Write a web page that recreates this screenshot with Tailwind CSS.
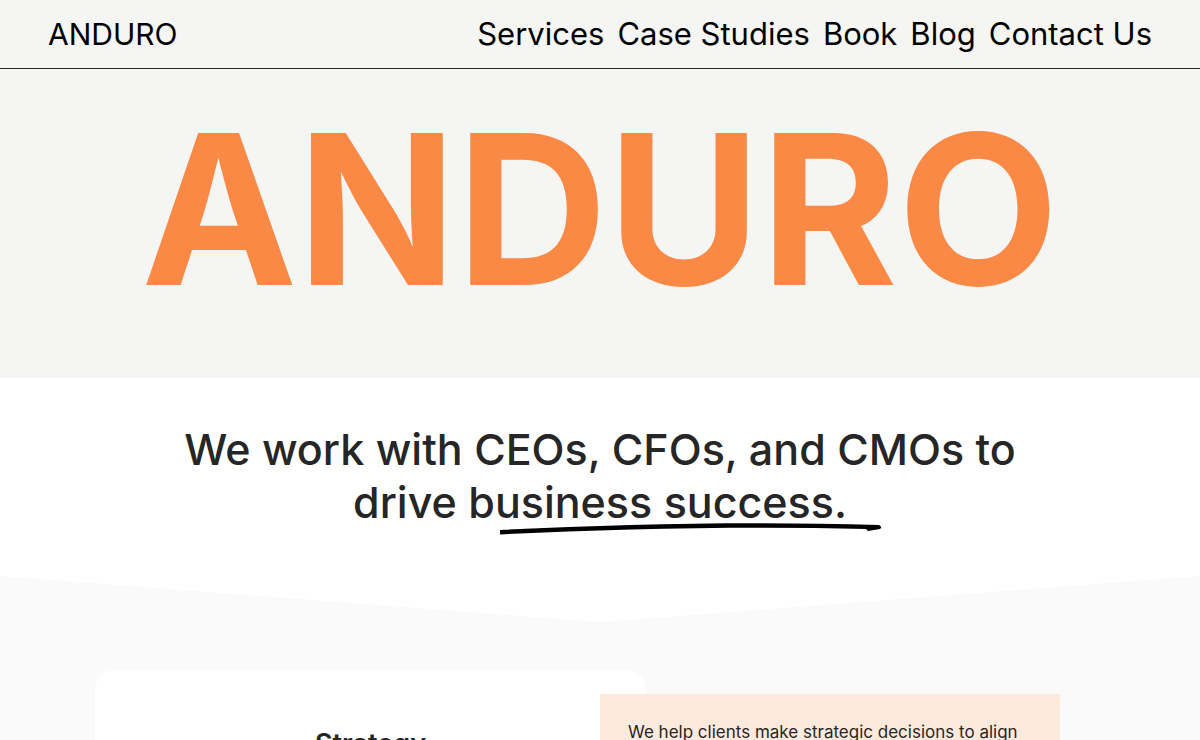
<!DOCTYPE html>
<html lang="en">
<head>
<meta charset="utf-8">
<meta name="viewport" content="width=device-width, initial-scale=1">
<title>Anduro</title>
<script src="https://cdn.jsdelivr.net/npm/@tailwindcss/browser@4"></script>
</head>
<body class="h-screen overflow-hidden bg-white font-['Inter',sans-serif] text-[#262626]">
<header class="flex items-center justify-between border-b border-[#262626] bg-[#f5f5f3] px-12 py-3 text-black">
  <a href="#" class="text-[30px] leading-[44px]">ANDURO</a>
  <nav class="flex gap-[13px] text-[31px] leading-[44px]">
    <a href="#">Services</a>
    <a href="#">Case Studies</a>
    <a href="#">Book</a>
    <a href="#">Blog</a>
    <a href="#">Contact Us</a>
  </nav>
</header>
<main>
  <section class="bg-[#f5f5f3] pt-9 pb-16 text-center">
    <h1 class="text-[209px] leading-[209px] font-bold text-[#fa8946]">ANDURO</h1>
  </section>
  <section class="px-12 pt-[45px] pb-[47px] text-center">
    <h2 class="text-[43px] leading-[53px] font-medium">We work with CEOs, CFOs, and CMOs to<br>drive
      <span class="relative">business success.<svg class="absolute top-full left-8 -mt-[7px] h-4 w-[382px]" viewBox="0 0 382 16" aria-hidden="true"><path d="M0 9C120 3 250 0 379 4Q383 6 380 8L368 10L366 8C240 5 110 8 0 13.500Z"/></svg></span>
    </h2>
  </section>
  <section class="flex items-start bg-[#fafafa] px-[95px] pt-[94px] [clip-path:polygon(0_0,50%_46px,100%_0,100%_100%,0_100%)]">
    <article class="w-[551px] rounded-t-[20px] bg-white pt-[58px] pb-24 text-center">
      <h3 class="text-[27px] leading-8 font-semibold">Strategy</h3>
    </article>
    <div class="-ml-[46px] mt-6 w-[460px] bg-[#fdeadc] px-7 pt-[26px] pb-24">
      <p class="text-[17px] leading-6">We help clients make strategic decisions to align</p>
    </div>
  </section>
</main>
</body>
</html>
